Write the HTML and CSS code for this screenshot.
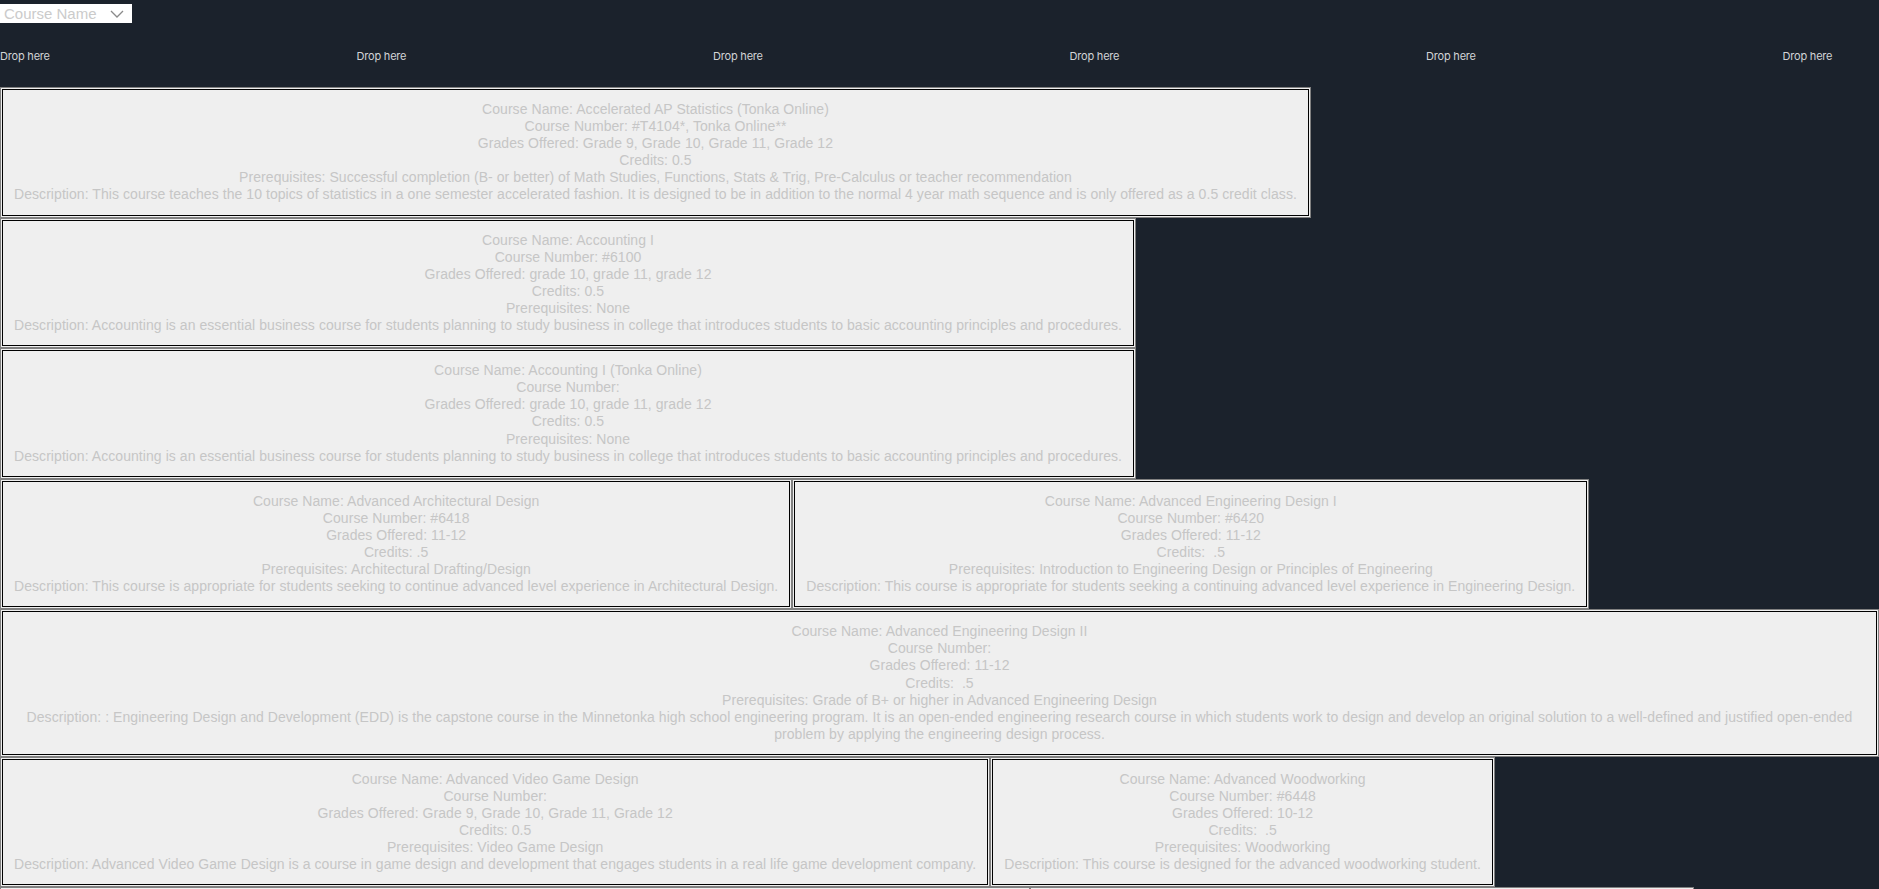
FILE: index.html
```html
<!DOCTYPE html>
<html lang="en">
<head>
    <meta charset="UTF-8">
    <meta name="viewport" content="width=device-width, initial-scale=1.0">
    <title>Courses</title>
    <link rel="stylesheet" href="styles.css">
</head>
<body>
    <div class="top">
        <div class="picker">
            <span>Course Name</span>
            <svg width="14" height="8" viewBox="0 0 14 8"><path d="M1 1 L7 7 L13 1" fill="none" stroke="#8a8a8a" stroke-width="1.3"/></svg>
        </div>
    </div>

    <div class="drops">
        <div class="drop">Drop here</div>
        <div class="drop">Drop here</div>
        <div class="drop">Drop here</div>
        <div class="drop">Drop here</div>
        <div class="drop">Drop here</div>
        <div class="drop">Drop here</div>
    </div>

    <div class="list">
        <div class="card">
            <div>Course Name: Accelerated AP Statistics (Tonka Online)</div>
            <div>Course Number: #T4104*, Tonka Online**</div>
            <div>Grades Offered: Grade 9, Grade 10, Grade 11, Grade 12</div>
            <div>Credits: 0.5</div>
            <div>Prerequisites: Successful completion (B- or better) of Math Studies, Functions, Stats &amp; Trig, Pre-Calculus or teacher recommendation</div>
            <div>Description: This course teaches the 10 topics of statistics in a one semester accelerated fashion. It is designed to be in addition to the normal 4 year math sequence and is only offered as a 0.5 credit class.</div>
        </div>
        <div class="card">
            <div>Course Name: Accounting I</div>
            <div>Course Number: #6100</div>
            <div>Grades Offered: grade 10, grade 11, grade 12</div>
            <div>Credits: 0.5</div>
            <div>Prerequisites: None</div>
            <div>Description: Accounting is an essential business course for students planning to study business in college that introduces students to basic accounting principles and procedures.</div>
        </div>
        <div class="card">
            <div>Course Name: Accounting I (Tonka Online)</div>
            <div>Course Number: </div>
            <div>Grades Offered: grade 10, grade 11, grade 12</div>
            <div>Credits: 0.5</div>
            <div>Prerequisites: None</div>
            <div>Description: Accounting is an essential business course for students planning to study business in college that introduces students to basic accounting principles and procedures.</div>
        </div>
        <div class="card">
            <div>Course Name: Advanced Architectural Design</div>
            <div>Course Number: #6418</div>
            <div>Grades Offered: 11-12</div>
            <div>Credits: .5</div>
            <div>Prerequisites: Architectural Drafting/Design</div>
            <div>Description: This course is appropriate for students seeking to continue advanced level experience in Architectural Design.</div>
        </div>
        <div class="card">
            <div>Course Name: Advanced Engineering Design I</div>
            <div>Course Number: #6420</div>
            <div>Grades Offered: 11-12</div>
            <div>Credits: &nbsp;.5</div>
            <div>Prerequisites: Introduction to Engineering Design or Principles of Engineering</div>
            <div>Description: This course is appropriate for students seeking a continuing advanced level experience in Engineering Design.</div>
        </div>
        <div class="card">
            <div>Course Name: Advanced Engineering Design II</div>
            <div>Course Number: </div>
            <div>Grades Offered: 11-12</div>
            <div>Credits: &nbsp;.5</div>
            <div>Prerequisites: Grade of B+ or higher in Advanced Engineering Design</div>
            <div>Description: : Engineering Design and Development (EDD) is the capstone course in the Minnetonka high school engineering program. It is an open-ended engineering research course in which students work to design and develop an original solution to a well-defined and justified open-ended problem by applying the engineering design process.</div>
        </div>
        <div class="card">
            <div>Course Name: Advanced Video Game Design</div>
            <div>Course Number: </div>
            <div>Grades Offered: Grade 9, Grade 10, Grade 11, Grade 12</div>
            <div>Credits: 0.5</div>
            <div>Prerequisites: Video Game Design</div>
            <div>Description: Advanced Video Game Design is a course in game design and development that engages students in a real life game development company.</div>
        </div>
        <div class="card">
            <div>Course Name: Advanced Woodworking</div>
            <div>Course Number: #6448</div>
            <div>Grades Offered: 10-12</div>
            <div>Credits: &nbsp;.5</div>
            <div>Prerequisites: Woodworking</div>
            <div>Description: This course is designed for the advanced woodworking student.</div>
        </div>
        <div class="card">
            <div>Course Name: African American Literature</div>
            <div>Course Number: #1522</div>
            <div>Grades Offered: 11-12</div>
            <div>Credits: .5</div>
            <div>Prerequisites: None</div>
            <div>Description: Students read and discuss novels, poetry, drama and essays by African American writers and examine the history and culture behind all these texts.</div>
        </div>
        <div class="card">
            <div>Course Name: Algebra 2</div>
            <div>Course Number: #4300</div>
            <div>Grades Offered: 10-12</div>
            <div>Credits: 1</div>
            <div>Prerequisites: Geometry</div>
            <div>Description: This course extends the study of functions, equations and inequalities and their graphing.</div>
        </div>
    </div>
</body>
</html>
```

FILE: styles.css
```css
body{
    margin: 0;
    background-color: #1b222c;
    font-family: "Liberation Sans", Arial, sans-serif;
}
.top{
    padding-top: 4px;
    height: 19px;
}
.picker{
    width: 132px;
    height: 19px;
    background-color: white;
    color: #cbcbcb;
    font-size: 15px;
    line-height: 19px;
    display: flex;
    align-items: center;
    justify-content: space-between;
    padding: 0 8px 0 4px;
    box-sizing: border-box;
}
.drops{
    display: flex;
    overflow: hidden;
    padding-top: 25px;
    height: 39px;
}
.drop{
    flex: 0 0 356.5px;
    color: #d2d4d6;
    font-family: Inter, "Noto Sans", sans-serif;
    font-size: 11px;
    line-height: 16px;
    letter-spacing: -0.2px;
}
.list{
    display: flex;
    flex-wrap: wrap;
    align-items: flex-start;
}
.card{
    background-color: #efefef;
    border: 1px solid #808080;
    box-shadow: inset 0 0 0 1px #efefef, inset 0 0 0 2px #000;
    padding: 13px;
    color: #c6c6c6;
    font-size: 14px;
    letter-spacing: 0.06px;
    line-height: 17.1px;
    text-align: center;
}
```
